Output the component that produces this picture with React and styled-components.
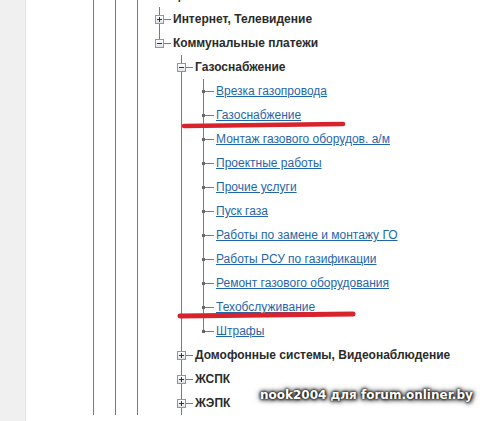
import styled, { createGlobalStyle } from 'styled-components'

const GlobalStyle = createGlobalStyle`
    html, body {
        margin: 0;
        padding: 0;
        background: #fff;
        overflow: hidden;
    }
`

const StyledPage = styled.div`
    position: relative;
    display: flex;
    width: 494px;
    height: 421px;
    overflow: hidden;
    font-family: Arial, "Liberation Sans", sans-serif;
    font-size: 12px;
`

const StyledSidebar = styled.div`
    width: 25px;
    background: #f0f0f0;
    border-right: 1px solid #e2e2e2;
    flex-shrink: 0;
`

const StyledMain = styled.div`
    flex: 1;
    padding-left: 56px;
    overflow: hidden;
`

const StyledTree = styled.div`
    display: flex;
    flex-direction: column;
    margin-top: -17px;
`

const StyledRow = styled.div`
    display: flex;
    align-items: center;
    height: 24px;
`

const StyledCell = styled.div`
    position: relative;
    display: flex;
    align-items: center;
    width: 22px;
    height: 24px;
    flex-shrink: 0;

    &::before {
        content: '';
        display: ${({ $top, $bottom }) => ($top || $bottom ? 'block' : 'none')};
        position: absolute;
        left: 11px;
        width: 1px;
        top: ${({ $top }) => ($top ? '0' : '12px')};
        bottom: ${({ $bottom }) => ($bottom ? '0' : '12px')};
        background: #7a7a7a;
    }
`

const StyledToggle = styled.span`
    position: relative;
    z-index: 1;
    box-sizing: border-box;
    width: 9px;
    height: 9px;
    margin-left: 7px;
    border: 1px solid #8e97a3;
    background: linear-gradient(#ffffff, #dfe3ea);

    &::before {
        content: '';
        position: absolute;
        left: 1px;
        top: 3px;
        width: 5px;
        height: 1px;
        background: #333;
    }

    &::after {
        content: '';
        display: ${({ $open }) => ($open ? 'none' : 'block')};
        position: absolute;
        left: 3px;
        top: 1px;
        width: 1px;
        height: 5px;
        background: #333;
    }
`

const StyledDot = styled.span`
    position: relative;
    z-index: 1;
    width: 3px;
    height: 3px;
    margin-left: 10px;
    background: #666;
`

const StyledDash = styled.span`
    flex: 1;
    height: 1px;
    margin-right: ${({ $leaf }) => ($leaf ? '0' : '-1px')};
    background: #7a7a7a;
`

const StyledLabel = styled.span`
    padding-left: 3px;
    font-weight: bold;
    color: #2b2b2b;
    white-space: nowrap;
`

const StyledLink = styled.a`
    padding-left: 2px;
    color: #1f66aa;
    text-decoration: underline;
    white-space: nowrap;
    cursor: pointer;
`

const StyledMarks = styled.svg`
    position: absolute;
    left: 0;
    top: 0;
    pointer-events: none;
`

const StyledWatermark = styled.div`
    position: absolute;
    left: 260px;
    top: 388px;
    font-family: "DejaVu Sans", Verdana, sans-serif;
    font-size: 12px;
    font-weight: bold;
    color: #fff;
    text-shadow: 0 0 2px #111, 0 0 3px #222, 0 0 5px #333, 1px 1px 4px #333, 0 0 6px #555;
    white-space: nowrap;
`

const leaves = [
    'Врезка газопровода',
    'Газоснабжение',
    'Монтаж газового оборудов. а/м',
    'Проектные работы',
    'Прочие услуги',
    'Пуск газа',
    'Работы по замене и монтажу ГО',
    'Работы РСУ по газификации',
    'Ремонт газового оборудования',
    'Техобслуживание',
    'Штрафы',
].map((label) => ({ label }))

const tree = [
    {
        label: 'Улица',
        open: true,
        children: [
            { label: 'Интернет, Телевидение', folder: true },
            {
                label: 'Коммунальные платежи',
                open: true,
                more: true,
                children: [
                    { label: 'Газоснабжение', open: true, children: leaves },
                    { label: 'Домофонные системы, Видеонаблюдение', folder: true },
                    { label: 'ЖСПК', folder: true },
                    { label: 'ЖЭПК', folder: true },
                ],
            },
        ],
    },
]

function flatten(nodes, guides, groupMore, rows) {
    nodes.forEach((node, i) => {
        const last = i === nodes.length - 1 && !groupMore
        rows.push({ node, guides, last })
        if (node.open && node.children) {
            flatten(node.children, [...guides, !last], node.more, rows)
        }
    })
    return rows
}

function TreeRow({ node, guides, last }) {
    const isFolder = node.folder || node.children
    return (
        <StyledRow>
            {guides.map((on, i) => (
                <StyledCell key={i} $top={on} $bottom={on} />
            ))}
            <StyledCell $top $bottom={!last}>
                {isFolder ? <StyledToggle $open={node.open} /> : <StyledDot />}
                <StyledDash $leaf={!isFolder} />
            </StyledCell>
            {isFolder
                ? <StyledLabel>{node.label}</StyledLabel>
                : <StyledLink>{node.label}</StyledLink>}
        </StyledRow>
    )
}

export default function App() {
    const rows = flatten(tree, [true, true], true, [])
    return (
        <>
            <GlobalStyle />
            <StyledPage>
                <StyledSidebar />
                <StyledMain>
                    <StyledTree>
                        {rows.map((row, i) => (
                            <TreeRow key={i} {...row} />
                        ))}
                    </StyledTree>
                </StyledMain>
                <StyledMarks width="494" height="421">
                    <path d="M184 126 Q260 125 343 124" stroke="#d8232c" strokeWidth="4.5" strokeLinecap="round" fill="none" />
                    <path d="M180 316 Q270 315 353 314" stroke="#d8232c" strokeWidth="5" strokeLinecap="round" fill="none" />
                </StyledMarks>
                <StyledWatermark>nook2004 для forum.onliner.by</StyledWatermark>
            </StyledPage>
        </>
    )
}
